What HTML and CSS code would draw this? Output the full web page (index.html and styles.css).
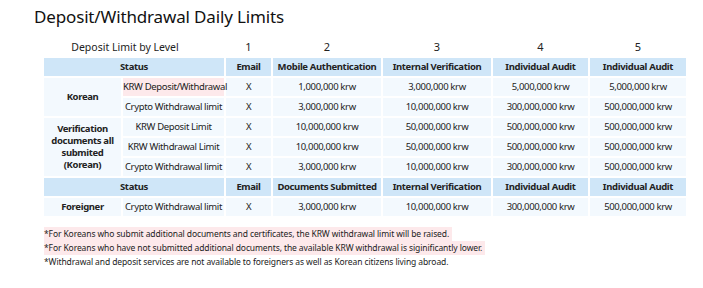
FILE: index.html
```html
<!DOCTYPE html>
<html lang="en">
<head>
    <meta charset="UTF-8">
    <title>Deposit/Withdrawal Daily Limits</title>
    <link rel="stylesheet" href="styles.css">
</head>
<body>
    <div class="container">
        <h1 class="page-title">Deposit/Withdrawal Daily Limits</h1>

        <table class="limits-table">
            <colgroup>
                <col class="col-status">
                <col class="col-type">
                <col class="col-email">
                <col class="col-lv2">
                <col class="col-lv3">
                <col class="col-lv4">
                <col class="col-lv5">
            </colgroup>
            <thead>
                <tr class="level-row">
                    <td colspan="2" class="level-label">Deposit Limit by Level</td>
                    <td>1</td>
                    <td>2</td>
                    <td>3</td>
                    <td>4</td>
                    <td>5</td>
                </tr>
            </thead>
            <tbody>
                <tr class="head-row">
                    <th colspan="2">Status</th>
                    <th>Email</th>
                    <th>Mobile Authentication</th>
                    <th>Internal Verification</th>
                    <th>Individual Audit</th>
                    <th>Individual Audit</th>
                </tr>
                <tr>
                    <td class="group" rowspan="2">Korean</td>
                    <td class="highlight">KRW Deposit/Withdrawal</td>
                    <td>X</td>
                    <td>1,000,000 krw</td>
                    <td>3,000,000 krw</td>
                    <td>5,000,000 krw</td>
                    <td>5,000,000 krw</td>
                </tr>
                <tr>
                    <td>Crypto Withdrawal limit</td>
                    <td>X</td>
                    <td>3,000,000 krw</td>
                    <td>10,000,000 krw</td>
                    <td>300,000,000 krw</td>
                    <td>500,000,000 krw</td>
                </tr>
                <tr>
                    <td class="group wrap" rowspan="3">Verification documents all submited (Korean)</td>
                    <td>KRW Deposit Limit</td>
                    <td>X</td>
                    <td>10,000,000 krw</td>
                    <td>50,000,000 krw</td>
                    <td>500,000,000 krw</td>
                    <td>500,000,000 krw</td>
                </tr>
                <tr>
                    <td>KRW Withdrawal Limit</td>
                    <td>X</td>
                    <td>10,000,000 krw</td>
                    <td>50,000,000 krw</td>
                    <td>500,000,000 krw</td>
                    <td>500,000,000 krw</td>
                </tr>
                <tr>
                    <td>Crypto Withdrawal limit</td>
                    <td>X</td>
                    <td>3,000,000 krw</td>
                    <td>10,000,000 krw</td>
                    <td>300,000,000 krw</td>
                    <td>500,000,000 krw</td>
                </tr>
                <tr class="head-row">
                    <th colspan="2">Status</th>
                    <th>Email</th>
                    <th>Documents Submitted</th>
                    <th>Internal Verification</th>
                    <th>Individual Audit</th>
                    <th>Individual Audit</th>
                </tr>
                <tr>
                    <td class="group">Foreigner</td>
                    <td>Crypto Withdrawal limit</td>
                    <td>X</td>
                    <td>3,000,000 krw</td>
                    <td>10,000,000 krw</td>
                    <td>300,000,000 krw</td>
                    <td>500,000,000 krw</td>
                </tr>
            </tbody>
        </table>

        <ul class="notes">
            <li class="marked">*For Koreans who submit additional documents and certificates, the KRW withdrawal limit will be raised.</li>
            <li class="marked">*For Koreans who have not submitted additional documents, the available KRW withdrawal is siginificantly lower.</li>
            <li>*Withdrawal and deposit services are not available to foreigners as well as Korean citizens living abroad.</li>
        </ul>
    </div>
</body>
</html>
```

FILE: styles.css
```css
:root {
    --text-color: #222;
    --head-bg: #cfe6f8;
    --cell-bg: #f3f9fe;
    --mark-bg: #fde9eb;
}

body {
    font-family: 'Noto Sans', 'Open Sans', sans-serif;
    margin: 0;
    background-color: #fff;
    color: var(--text-color);
}

.container {
    padding: 5px 0 0 34px;
}

.page-title {
    font-size: 17px;
    font-weight: 400;
    margin: 0 0 8px 0;
    color: #111;
    letter-spacing: -0.15px;
}

.limits-table {
    margin-left: 8px;
    width: 646px;
    border-collapse: separate;
    border-spacing: 2px;
    font-size: 9.5px;
    table-layout: fixed;
    letter-spacing: -0.35px;
}

.col-status { width: 77px; }
.col-type { width: 101px; }
.col-email { width: 45px; }
.col-lv2 { width: 108px; }
.col-lv3 { width: 108px; }
.col-lv4 { width: 95px; }
.col-lv5 { width: 96px; }

.limits-table td,
.limits-table th {
    height: 18px;
    padding: 0;
    text-align: center;
    background-color: var(--cell-bg);
    line-height: 1.2;
    white-space: nowrap;
}

.limits-table th {
    background-color: var(--head-bg);
    font-weight: 700;
}

.level-row td {
    background-color: transparent;
    font-size: 11px;
    height: 18px;
    letter-spacing: 0;
}

.level-row .level-label {
    font-size: 10.5px;
    padding-right: 18px;
}

.limits-table .group {
    font-weight: 700;
}

.limits-table .wrap {
    white-space: normal;
    padding: 0 4px;
    line-height: 1.25;
}

.limits-table .highlight {
    background-color: var(--mark-bg);
}

.notes {
    list-style: none;
    margin: 9px 0 0 10px;
    padding: 0;
    font-size: 8.5px;
    letter-spacing: -0.1px;
}

.notes li {
    width: fit-content;
    padding: 1px 3px 2px 0;
}

.notes li.marked {
    background-color: var(--mark-bg);
}
```
